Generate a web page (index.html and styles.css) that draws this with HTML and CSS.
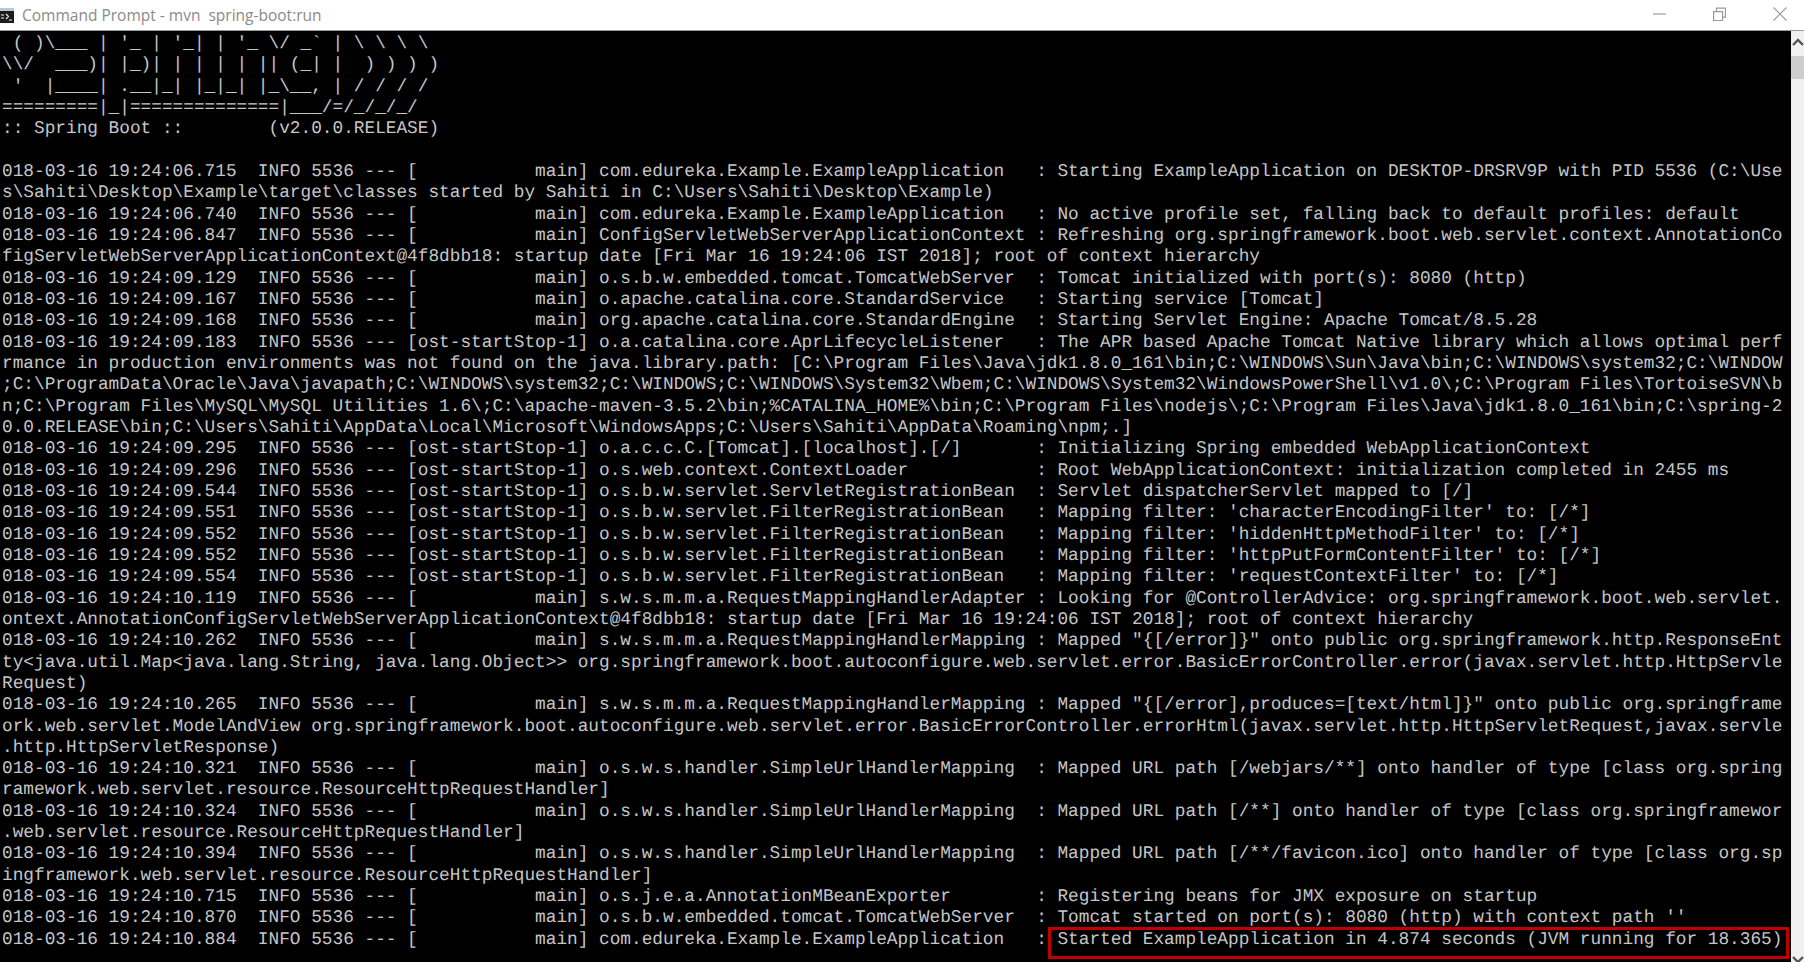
FILE: index.html
```
<!DOCTYPE html>
<html lang="en">
<head>
<meta charset="utf-8">
<title>Command Prompt - mvn spring-boot:run</title>
<link rel="stylesheet" href="styles.css">
</head>
<body>
<div class="window">
  <header class="titlebar">
    <svg class="app-icon" width="14" height="15" viewBox="0 0 14 15">
      <rect x="0" y="0" width="14" height="15" fill="#1c1c1c"/>
      <rect x="0" y="0" width="14" height="3" fill="#b8c8d8"/>
      <path d="M1 7h3M1 10h3M6 6l2.500 2.500L6 11M9 12h3" stroke="#eee" stroke-width="1.100" fill="none"/>
    </svg>
    <span class="title">Command Prompt - mvn&nbsp; spring-boot:run</span>
    <div class="controls">
      <svg class="ctl" width="13" height="14" viewBox="0 0 13 14"><path d="M0 7h13" stroke="#aaa" stroke-width="1.400"/></svg>
      <svg class="ctl" width="13" height="14" viewBox="0 0 13 14"><path d="M.6 4.600h9v9h-9zM3.500 4.600V1.100h9v9H9.600" stroke="#999" stroke-width="1.200" fill="none"/></svg>
      <svg class="ctl" width="14" height="14" viewBox="0 0 14 14"><path d="M.5.5l13 13M13.500.5l-13 13" stroke="#999" stroke-width="1.100" fill="none"/></svg>
    </div>
  </header>
  <main class="body">
    <div class="console">
<pre class="log"> ( )\___ | '_ | '_| | '_ \/ _` | \ \ \ \
\\/  ___)| |_)| | | | | || (_| |  ) ) ) )
 '  |____| .__|_| |_|_| |_\__, | / / / /
=========|_|==============|___/=/_/_/_/
:: Spring Boot ::        (v2.0.0.RELEASE)

018-03-16 19:24:06.715  INFO 5536 --- [           main] com.edureka.Example.ExampleApplication   : Starting ExampleApplication on DESKTOP-DRSRV9P with PID 5536 (C:\Use
s\Sahiti\Desktop\Example\target\classes started by Sahiti in C:\Users\Sahiti\Desktop\Example)
018-03-16 19:24:06.740  INFO 5536 --- [           main] com.edureka.Example.ExampleApplication   : No active profile set, falling back to default profiles: default
018-03-16 19:24:06.847  INFO 5536 --- [           main] ConfigServletWebServerApplicationContext : Refreshing org.springframework.boot.web.servlet.context.AnnotationCo
figServletWebServerApplicationContext@4f8dbb18: startup date [Fri Mar 16 19:24:06 IST 2018]; root of context hierarchy
018-03-16 19:24:09.129  INFO 5536 --- [           main] o.s.b.w.embedded.tomcat.TomcatWebServer  : Tomcat initialized with port(s): 8080 (http)
018-03-16 19:24:09.167  INFO 5536 --- [           main] o.apache.catalina.core.StandardService   : Starting service [Tomcat]
018-03-16 19:24:09.168  INFO 5536 --- [           main] org.apache.catalina.core.StandardEngine  : Starting Servlet Engine: Apache Tomcat/8.5.28
018-03-16 19:24:09.183  INFO 5536 --- [ost-startStop-1] o.a.catalina.core.AprLifecycleListener   : The APR based Apache Tomcat Native library which allows optimal perf
rmance in production environments was not found on the java.library.path: [C:\Program Files\Java\jdk1.8.0_161\bin;C:\WINDOWS\Sun\Java\bin;C:\WINDOWS\system32;C:\WINDOW
;C:\ProgramData\Oracle\Java\javapath;C:\WINDOWS\system32;C:\WINDOWS;C:\WINDOWS\System32\Wbem;C:\WINDOWS\System32\WindowsPowerShell\v1.0\;C:\Program Files\TortoiseSVN\b
n;C:\Program Files\MySQL\MySQL Utilities 1.6\;C:\apache-maven-3.5.2\bin;%CATALINA_HOME%\bin;C:\Program Files\nodejs\;C:\Program Files\Java\jdk1.8.0_161\bin;C:\spring-2
0.0.RELEASE\bin;C:\Users\Sahiti\AppData\Local\Microsoft\WindowsApps;C:\Users\Sahiti\AppData\Roaming\npm;.]
018-03-16 19:24:09.295  INFO 5536 --- [ost-startStop-1] o.a.c.c.C.[Tomcat].[localhost].[/]       : Initializing Spring embedded WebApplicationContext
018-03-16 19:24:09.296  INFO 5536 --- [ost-startStop-1] o.s.web.context.ContextLoader            : Root WebApplicationContext: initialization completed in 2455 ms
018-03-16 19:24:09.544  INFO 5536 --- [ost-startStop-1] o.s.b.w.servlet.ServletRegistrationBean  : Servlet dispatcherServlet mapped to [/]
018-03-16 19:24:09.551  INFO 5536 --- [ost-startStop-1] o.s.b.w.servlet.FilterRegistrationBean   : Mapping filter: 'characterEncodingFilter' to: [/*]
018-03-16 19:24:09.552  INFO 5536 --- [ost-startStop-1] o.s.b.w.servlet.FilterRegistrationBean   : Mapping filter: 'hiddenHttpMethodFilter' to: [/*]
018-03-16 19:24:09.552  INFO 5536 --- [ost-startStop-1] o.s.b.w.servlet.FilterRegistrationBean   : Mapping filter: 'httpPutFormContentFilter' to: [/*]
018-03-16 19:24:09.554  INFO 5536 --- [ost-startStop-1] o.s.b.w.servlet.FilterRegistrationBean   : Mapping filter: 'requestContextFilter' to: [/*]
018-03-16 19:24:10.119  INFO 5536 --- [           main] s.w.s.m.m.a.RequestMappingHandlerAdapter : Looking for @ControllerAdvice: org.springframework.boot.web.servlet.
ontext.AnnotationConfigServletWebServerApplicationContext@4f8dbb18: startup date [Fri Mar 16 19:24:06 IST 2018]; root of context hierarchy
018-03-16 19:24:10.262  INFO 5536 --- [           main] s.w.s.m.m.a.RequestMappingHandlerMapping : Mapped "{[/error]}" onto public org.springframework.http.ResponseEnt
ty&lt;java.util.Map&lt;java.lang.String, java.lang.Object&gt;&gt; org.springframework.boot.autoconfigure.web.servlet.error.BasicErrorController.error(javax.servlet.http.HttpServle
Request)
018-03-16 19:24:10.265  INFO 5536 --- [           main] s.w.s.m.m.a.RequestMappingHandlerMapping : Mapped "{[/error],produces=[text/html]}" onto public org.springframe
ork.web.servlet.ModelAndView org.springframework.boot.autoconfigure.web.servlet.error.BasicErrorController.errorHtml(javax.servlet.http.HttpServletRequest,javax.servle
.http.HttpServletResponse)
018-03-16 19:24:10.321  INFO 5536 --- [           main] o.s.w.s.handler.SimpleUrlHandlerMapping  : Mapped URL path [/webjars/**] onto handler of type [class org.spring
ramework.web.servlet.resource.ResourceHttpRequestHandler]
018-03-16 19:24:10.324  INFO 5536 --- [           main] o.s.w.s.handler.SimpleUrlHandlerMapping  : Mapped URL path [/**] onto handler of type [class org.springframewor
.web.servlet.resource.ResourceHttpRequestHandler]
018-03-16 19:24:10.394  INFO 5536 --- [           main] o.s.w.s.handler.SimpleUrlHandlerMapping  : Mapped URL path [/**/favicon.ico] onto handler of type [class org.sp
ingframework.web.servlet.resource.ResourceHttpRequestHandler]
018-03-16 19:24:10.715  INFO 5536 --- [           main] o.s.j.e.a.AnnotationMBeanExporter        : Registering beans for JMX exposure on startup
018-03-16 19:24:10.870  INFO 5536 --- [           main] o.s.b.w.embedded.tomcat.TomcatWebServer  : Tomcat started on port(s): 8080 (http) with context path ''
018-03-16 19:24:10.884  INFO 5536 --- [           main] com.edureka.Example.ExampleApplication   : Started ExampleApplication in 4.874 seconds (JVM running for 18.365)</pre>
      <div class="highlight"></div>
    </div>
    <aside class="scrollbar">
      <svg class="arrow" width="13" height="10" viewBox="0 0 13 10"><path d="M2 8l5-5 5 5" stroke="#555" stroke-width="2.400" fill="none"/></svg>
      <div class="thumb"></div>
      <svg class="arrow-down" width="13" height="10" viewBox="0 0 13 10"><path d="M2 2l5 5 5-5" stroke="#555" stroke-width="2.400" fill="none"/></svg>
    </aside>
  </main>
</div>
</body>
</html>
```
FILE: styles.css
```
* { box-sizing: border-box; }
html, body { margin: 0; height: 100%; overflow: hidden; background: #000; }
.window { display: flex; flex-direction: column; height: 962px; width: 1804px; }
.titlebar {
  display: flex; align-items: center; height: 31px; flex: none;
  background: #fff; border-bottom: 1px solid #9a9a9a;
}
.app-icon { flex: none; }
.title {
  margin-left: 8px; font-family: "Open Sans", "Noto Sans", sans-serif;
  font-size: 15.5px; color: #8a8a8a; white-space: pre;
}
.controls { margin-left: auto; display: flex; align-items: center; gap: 47px; padding-right: 17px; padding-bottom: 3px; }
.ctl { display: block; }
.body { flex: 1; display: flex; min-height: 0; }
.console { position: relative; flex: 1; background: #000; overflow: hidden; }
.log {
  margin: 0; padding: 3px 0 0 2px;
  font-family: "Liberation Mono", monospace; font-size: 17.78px; line-height: 21.33px;
  text-rendering: geometricPrecision;
  color: #c6c6c6; white-space: pre;
}
.highlight {
  position: absolute; left: 1048px; top: 896px; width: 741px; height: 32px;
  border: 3px solid #c00000;
}
.scrollbar {
  flex: none; width: 13px; background: #f0f0f0;
  display: flex; flex-direction: column; align-items: center;
}
.arrow { margin-top: 6px; }
.thumb { width: 100%; height: 23px; margin-top: 9px; background: #cdcdcd; }
.arrow-down { margin-top: auto; margin-bottom: -3px; }
```
